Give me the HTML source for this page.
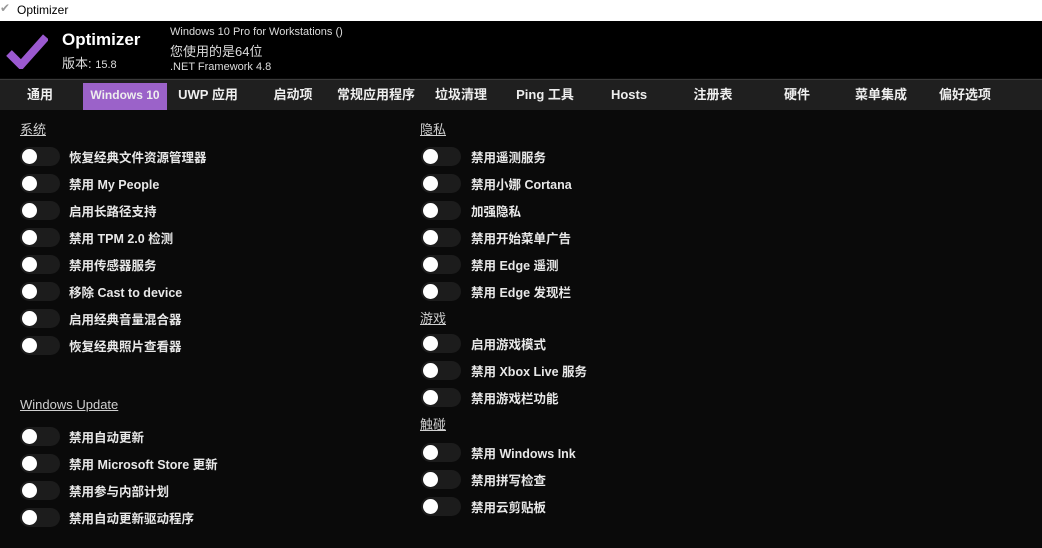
<!DOCTYPE html><html><head><meta charset="utf-8"><style>
body{margin:0;width:1042px;height:548px;background:#0a0a0a;font-family:"Liberation Sans","Noto Sans CJK SC",sans-serif;color:#e6e6e6;overflow:hidden;position:relative}
.a{position:absolute;white-space:nowrap}
.tb{top:0;left:0;width:1042px;height:21px;background:#fff;color:#000;font-size:12px}
.hd{top:21px;left:0;width:1042px;height:57px;background:#000}
.tabs{top:79px;left:0;width:1042px;height:30px;background:#1f1f1f;border-top:1px solid #3a3a3a}
.t{position:absolute;top:0;height:30px;line-height:30px;font-size:13px;font-weight:bold;text-align:center;width:84px;color:#eee}
.sec{font-size:13px;text-decoration:underline;color:#d0d0d0}
.r{font-size:12.5px;font-weight:bold;color:#e8e8e8}
.sw{position:absolute;width:40px;height:19px;border-radius:10px;background:#1c1c1c}
.sw:after{content:"";position:absolute;left:2px;top:2px;width:15px;height:15px;border-radius:50%;background:#fff}
</style></head><body>
<div class="a tb"><span style="position:absolute;left:0;top:1px;color:#999">✔</span><span style="position:absolute;left:17px;top:3px">Optimizer</span></div>
<div class="a hd">
<svg style="position:absolute;left:6px;top:12px" width="42" height="36" viewBox="0 0 42 36"><path d="M3 20 L15 32 L40 4" stroke="#9b59d0" stroke-width="8" fill="none"/></svg>
<div class="a" style="left:62px;top:9px;font-size:17px;font-weight:bold;color:#fff">Optimizer</div>
<div class="a" style="left:62px;top:32px;font-size:13px;color:#ddd">版本: <span style="font-size:11px">15.8</span></div>
<div class="a" style="left:170px;top:5px;font-size:11px;color:#ddd">Windows 10 Pro for Workstations ()</div>
<div class="a" style="left:170px;top:20px;font-size:13px;color:#ddd">您使用的是64位</div>
<div class="a" style="left:170px;top:40px;font-size:11px;color:#ddd">.NET Framework 4.8</div>
</div>
<div class="a tabs">
<div class="t" style="left:-2px">通用</div>
<div class="t" style="left:83px;top:3px;height:27px;line-height:25px;background:#9b62c9;font-size:12px">Windows 10</div>
<div class="t" style="left:166px">UWP 应用</div>
<div class="t" style="left:251px">启动项</div>
<div class="t" style="left:334px">常规应用程序</div>
<div class="t" style="left:419px">垃圾清理</div>
<div class="t" style="left:503px">Ping 工具</div>
<div class="t" style="left:587px">Hosts</div>
<div class="t" style="left:671px">注册表</div>
<div class="t" style="left:755px">硬件</div>
<div class="t" style="left:839px">菜单集成</div>
<div class="t" style="left:923px">偏好选项</div>
</div>
<div class="a sec" style="left:20px;top:119px">系统</div>
<div class="a sec" style="left:20px;top:397px">Windows Update</div>
<div class="a sec" style="left:420px;top:119px">隐私</div>
<div class="a sec" style="left:420px;top:308px">游戏</div>
<div class="a sec" style="left:420px;top:414px">触碰</div>
<div class="sw" style="left:20px;top:147px"></div><div class="a r" style="left:69px;top:147px">恢复经典文件资源管理器</div>
<div class="sw" style="left:20px;top:174px"></div><div class="a r" style="left:69px;top:174px">禁用 My People</div>
<div class="sw" style="left:20px;top:201px"></div><div class="a r" style="left:69px;top:201px">启用长路径支持</div>
<div class="sw" style="left:20px;top:228px"></div><div class="a r" style="left:69px;top:228px">禁用 TPM 2.0 检测</div>
<div class="sw" style="left:20px;top:255px"></div><div class="a r" style="left:69px;top:255px">禁用传感器服务</div>
<div class="sw" style="left:20px;top:282px"></div><div class="a r" style="left:69px;top:282px">移除 Cast to device</div>
<div class="sw" style="left:20px;top:309px"></div><div class="a r" style="left:69px;top:309px">启用经典音量混合器</div>
<div class="sw" style="left:20px;top:336px"></div><div class="a r" style="left:69px;top:336px">恢复经典照片查看器</div>
<div class="sw" style="left:20px;top:427px"></div><div class="a r" style="left:69px;top:427px">禁用自动更新</div>
<div class="sw" style="left:20px;top:454px"></div><div class="a r" style="left:69px;top:454px">禁用 Microsoft Store 更新</div>
<div class="sw" style="left:20px;top:481px"></div><div class="a r" style="left:69px;top:481px">禁用参与内部计划</div>
<div class="sw" style="left:20px;top:508px"></div><div class="a r" style="left:69px;top:508px">禁用自动更新驱动程序</div>
<div class="sw" style="left:421px;top:147px"></div><div class="a r" style="left:471px;top:147px">禁用遥测服务</div>
<div class="sw" style="left:421px;top:174px"></div><div class="a r" style="left:471px;top:174px">禁用小娜 Cortana</div>
<div class="sw" style="left:421px;top:201px"></div><div class="a r" style="left:471px;top:201px">加强隐私</div>
<div class="sw" style="left:421px;top:228px"></div><div class="a r" style="left:471px;top:228px">禁用开始菜单广告</div>
<div class="sw" style="left:421px;top:255px"></div><div class="a r" style="left:471px;top:255px">禁用 Edge 遥测</div>
<div class="sw" style="left:421px;top:282px"></div><div class="a r" style="left:471px;top:282px">禁用 Edge 发现栏</div>
<div class="sw" style="left:421px;top:334px"></div><div class="a r" style="left:471px;top:334px">启用游戏模式</div>
<div class="sw" style="left:421px;top:361px"></div><div class="a r" style="left:471px;top:361px">禁用 Xbox Live 服务</div>
<div class="sw" style="left:421px;top:388px"></div><div class="a r" style="left:471px;top:388px">禁用游戏栏功能</div>
<div class="sw" style="left:421px;top:443px"></div><div class="a r" style="left:471px;top:443px">禁用 Windows Ink</div>
<div class="sw" style="left:421px;top:470px"></div><div class="a r" style="left:471px;top:470px">禁用拼写检查</div>
<div class="sw" style="left:421px;top:497px"></div><div class="a r" style="left:471px;top:497px">禁用云剪贴板</div>
</body></html>
